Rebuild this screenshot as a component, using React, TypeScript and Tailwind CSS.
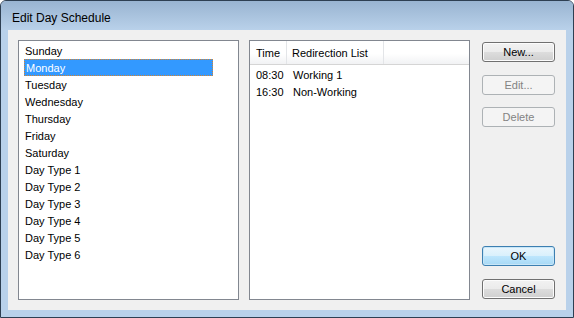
import React from 'react'

// Edit Day Schedule — Windows 7 style dialog

const DAYS = [
  'Sunday',
  'Monday',
  'Tuesday',
  'Wednesday',
  'Thursday',
  'Friday',
  'Saturday',
  'Day Type 1',
  'Day Type 2',
  'Day Type 3',
  'Day Type 4',
  'Day Type 5',
  'Day Type 6',
]

const ENTRIES = [
  { time: '08:30', list: 'Working 1' },
  { time: '16:30', list: 'Non-Working' },
]

const FONT = { fontFamily: '"Liberation Sans", Arial, sans-serif' }

function Button({ label, disabled, primary }: { label: string; disabled?: boolean; primary?: boolean }) {
  // 預設按鈕 / 停用按鈕 / 一般按鈕
  const look = disabled
    ? 'border-[#adb2b5] bg-[#f4f4f4] text-[#838383]'
    : primary
      ? 'border-[#3c7fb1] bg-[linear-gradient(#eaf6fd_0%,#d9f0fc_50%,#bee6fd_50%,#a7d9f5_100%)] text-black shadow-[inset_0_0_0_1px_#c8e6f7]'
      : 'border-[#707070] bg-[linear-gradient(#f2f2f2_0%,#ebebeb_50%,#dddddd_50%,#cfcfcf_100%)] text-black shadow-[inset_0_0_0_1px_#fcfcfc]'

  return (
    <div
      className={`flex h-[20px] w-[73px] items-center justify-center rounded-[3px] border pt-[1px] text-[11px] leading-none ${look}`}
    >
      {label}
    </div>
  )
}

export default function App() {
  return (
    <div
      className="flex h-[318px] w-[574px] flex-col overflow-hidden rounded-t-[6px] border border-[#2e3f52] bg-[#b9d1ea]"
      style={FONT}
    >
      {/* 標題列 */}
      <div className="h-[29px] shrink-0 bg-[linear-gradient(#99b4d1,#b9d1ea)] pl-[11px] pt-[10px] text-[12px] leading-[14px] text-black">
        Edit Day Schedule
      </div>

      <div className="flex-1 px-[7px] pb-[7px]">
        <div className="flex h-[280px] gap-[10px] bg-[#f0f0f0] p-[10px] text-[11px] text-black">
          {/* 日期清單 */}
          <div className="h-[260px] w-[221px] border border-[#828790] bg-white pl-[5px] pt-[1px]">
            {DAYS.map((d) => (
              <div
                key={d}
                className={`h-[17px] w-[189px] pl-[1px] ${
                  d === 'Monday'
                    ? 'border border-dotted border-[#d5832f] bg-[#3399ff] text-white'
                    : ''
                }`}
              >
                <div className={d === 'Monday' ? 'leading-[17px]' : 'pt-[1px] leading-[17px]'}>{d}</div>
              </div>
            ))}
          </div>

          {/* 排程清單 */}
          <div className="h-[260px] w-[221px] border border-[#828790] bg-white">
            <div className="flex h-[24px] border-b border-[#d5d5d5] bg-[linear-gradient(#ffffff_0%,#ffffff_55%,#f1f2f4_100%)] leading-[24px]">
              <div className="w-[37px] border-r border-[#e3e5e8] pl-[6px]">Time</div>
              <div className="w-[97px] border-r border-[#e3e5e8] pl-[5px]">Redirection List</div>
            </div>
            <div className="pt-[2px]">
              {ENTRIES.map((e) => (
                <div key={e.time} className="flex h-[17px] leading-[17px]">
                  <div className="w-[37px] pl-[6px]">{e.time}</div>
                  <div className="pl-[6px]">{e.list}</div>
                </div>
              ))}
            </div>
          </div>

          {/* 按鈕 */}
          <div className="ml-[2px] flex h-[260px] flex-col pb-[1px] pt-[2px]">
            <div className="flex flex-col gap-[13px]">
              <Button label="New..." />
              <div className="flex flex-col gap-[12px]">
                <Button label="Edit..." disabled />
                <Button label="Delete" disabled />
              </div>
            </div>
            <div className="mt-auto flex flex-col gap-[13px]">
              <Button label="OK" primary />
              <Button label="Cancel" />
            </div>
          </div>
        </div>
      </div>
    </div>
  )
}
